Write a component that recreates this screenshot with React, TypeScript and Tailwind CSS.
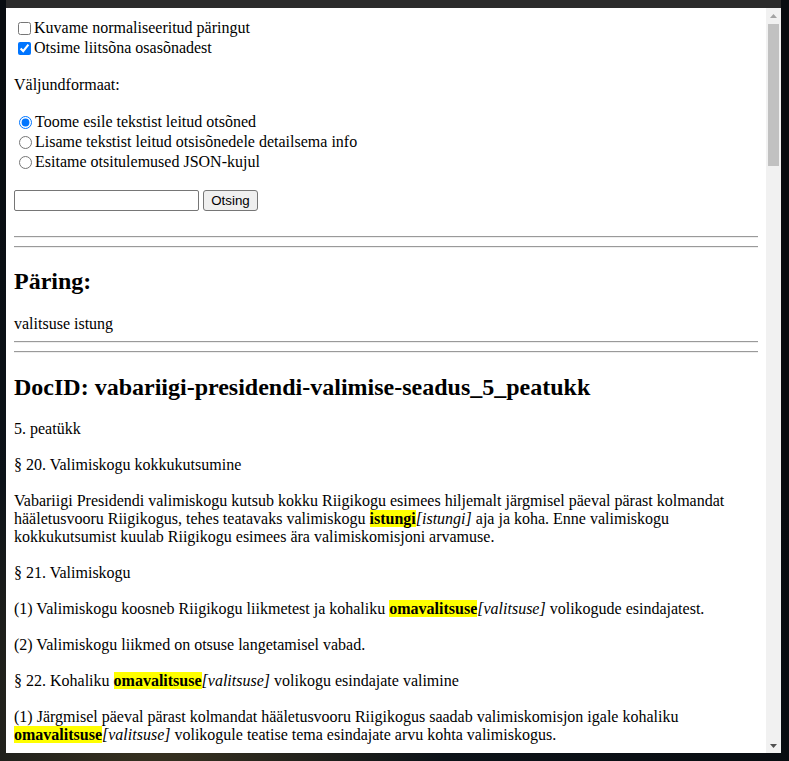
import type { ReactNode } from "react";

const Hl = ({ word, base }: { word: string; base: string }) => (
  <>
    <b className="bg-[#ffff00] font-bold">{word}</b>
    <i className="italic">[{base}]</i>
  </>
);

const Rule = ({ className = "" }: { className?: string }) => (
  <div className={`h-[2px] border-t border-b border-t-[#9a9a9a] border-b-[#eeeeee] ${className}`} />
);

const Line = ({ children }: { children?: ReactNode }) => <div className="h-[18px] whitespace-nowrap">{children}</div>;

function CheckRow({ label, checked }: { label: string; checked?: boolean }) {
  return (
    <label className="flex h-[20px] items-center">
      <input type="checkbox" defaultChecked={checked} className="m-[3px_3px_3px_4px] size-[13px]" />
      <span>{label}</span>
    </label>
  );
}

function RadioRow({ label, checked }: { label: string; checked?: boolean }) {
  return (
    <label className="flex h-[20px] items-center">
      <input type="radio" name="format" defaultChecked={checked} className="m-[3px_3px_3px_5px] size-[13px]" />
      <span>{label}</span>
    </label>
  );
}

function Scrollbar() {
  return (
    <div className="flex w-[15px] flex-col bg-[#f1f1f1]">
      <div className="flex h-[16px] items-center justify-center">
        <svg width="7" height="4" viewBox="0 0 7 4">
          <path d="M3.5 0 L7 4 L0 4 Z" fill="#a3a3a3" />
        </svg>
      </div>
      <div className="mx-[2px] h-[142px] bg-[#c1c1c1]" />
      <div className="flex-1" />
      <div className="flex h-[15px] items-center justify-center">
        <svg width="7" height="4" viewBox="0 0 7 4">
          <path d="M0 0 L7 0 L3.5 4 Z" fill="#505050" />
        </svg>
      </div>
    </div>
  );
}

export default function App() {
  return (
    <div className="h-[761px] w-[789px] overflow-hidden bg-[radial-gradient(circle_at_20%_95%,#3a3320_0%,#0c1218_30%,#080c10_70%)] pb-[8px] pl-[6px] pr-[8px]">
      <div className="flex h-full flex-col">
        <div className="h-[8px] bg-[#2b2b2b]" />
        <div className="flex min-h-0 flex-1">
          <div className="flex-1 overflow-hidden bg-white px-[8px] pt-[10px] font-['Liberation_Serif',serif] text-[16px] leading-[18px] text-black">
            <form onSubmit={(e) => e.preventDefault()}>
              <CheckRow label="Kuvame normaliseeritud päringut" />
              <CheckRow label="Otsime liitsõna osasõnadest" checked />
              <p className="mt-[18px]">Väljundformaat:</p>
              <div className="mt-[18px]">
                <RadioRow label="Toome esile tekstist leitud otsõned" checked />
                <RadioRow label="Lisame tekstist leitud otsisõnedele detailsema info" />
                <RadioRow label="Esitame otsitulemused JSON-kujul" />
              </div>
              <div className="mt-[18px] flex h-[21px] items-center gap-[4px]">
                <input
                  type="text"
                  className="h-[21px] w-[185px] rounded-[2px] border border-[#767676] px-[2px] font-['Liberation_Sans',sans-serif] text-[13px]"
                />
                <button
                  type="submit"
                  className="h-[21px] w-[55px] rounded-[3px] border border-[#767676] bg-[#efefef] font-['Liberation_Sans',sans-serif] text-[13.33px] leading-none"
                >
                  Otsing
                </button>
              </div>
            </form>
            <Rule className="mt-[25px]" />
            <Rule className="mt-[8px]" />
            <h2 className="mt-[19px] text-[24px] font-bold leading-[28px]">Päring:</h2>
            <p className="mt-[20px]">valitsuse istung</p>
            <Rule className="mt-[8px]" />
            <Rule className="mt-[8px]" />
            <h2 className="mt-[20px] text-[24px] font-bold leading-[28px]">DocID: vabariigi-presidendi-valimise-seadus_5_peatukk</h2>
            <div className="mt-[19px]">
              <Line>5. peatükk</Line>
              <Line />
              <Line>§ 20. Valimiskogu kokkukutsumine</Line>
              <Line />
              <Line>
                Vabariigi Presidendi valimiskogu kutsub kokku Riigikogu esimees hiljemalt järgmisel päeval pärast kolmandat
              </Line>
              <Line>
                hääletusvooru Riigikogus, tehes teatavaks valimiskogu <Hl word="istungi" base="istungi" /> aja ja koha. Enne valimiskogu
              </Line>
              <Line>kokkukutsumist kuulab Riigikogu esimees ära valimiskomisjoni arvamuse.</Line>
              <Line />
              <Line>§ 21. Valimiskogu</Line>
              <Line />
              <Line>
                (1) Valimiskogu koosneb Riigikogu liikmetest ja kohaliku <Hl word="omavalitsuse" base="valitsuse" /> volikogude esindajatest.
              </Line>
              <Line />
              <Line>(2) Valimiskogu liikmed on otsuse langetamisel vabad.</Line>
              <Line />
              <Line>
                § 22. Kohaliku <Hl word="omavalitsuse" base="valitsuse" /> volikogu esindajate valimine
              </Line>
              <Line />
              <Line>(1) Järgmisel päeval pärast kolmandat hääletusvooru Riigikogus saadab valimiskomisjon igale kohaliku</Line>
              <Line>
                <Hl word="omavalitsuse" base="valitsuse" /> volikogule teatise tema esindajate arvu kohta valimiskogus.
              </Line>
            </div>
          </div>
          <Scrollbar />
        </div>
      </div>
    </div>
  );
}
